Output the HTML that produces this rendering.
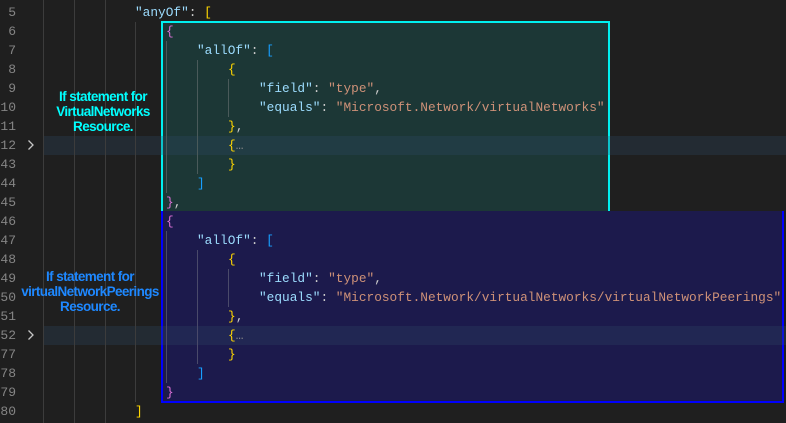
<!DOCTYPE html>
<html><head><style>
body{margin:0;width:786px;height:423px;background:#1f1f1f;overflow:hidden;position:relative;font-family:"Liberation Mono",monospace;font-size:12.8px}
.l{position:absolute;height:19px;line-height:19px;white-space:pre}
.n{position:absolute;left:0;width:16px;text-align:right;color:#858585;height:19px;line-height:19px;font-family:"Liberation Mono",monospace;font-size:13px}
.g{position:absolute;width:1px;background:#3c3c3c}
.k{color:#9cdcfe}.s{color:#ce9178}.w{color:#cccccc}.y{color:#ffd700}.p{color:#da70d6}.b{color:#179fff}.d{color:#8a8a8a}
.box{position:absolute;box-sizing:border-box;border:2px solid}
.hl{position:absolute;left:43px;right:0;height:19px;background:rgba(45,75,105,0.28)}
.ann{position:absolute;font-family:"Liberation Sans",sans-serif;font-weight:bold;font-size:13.5px;line-height:15px;text-align:center;letter-spacing:-0.6px}
.chev{position:absolute;left:27px}
</style></head><body>
<div class="box" style="left:161px;top:21px;width:449px;height:192px;border-color:#00f0f0;background:#1c3736"></div>
<div class="box" style="left:161px;top:211px;width:623px;height:192px;border-color:#0000ff;background:#1c1a4c;border-top:none"></div>
<div class="hl" style="top:136px"></div>
<div class="hl" style="top:326px"></div>
<div class="g" style="left:43px;top:0;height:423px"></div>
<div class="g" style="left:74px;top:0;height:423px"></div>
<div class="g" style="left:105px;top:0;height:423px"></div>
<div class="g" style="left:135px;top:22px;height:380px"></div>
<div class="g" style="left:166px;top:41px;height:152px;background:#4a5a5a"></div>
<div class="g" style="left:197px;top:60px;height:114px;background:#4a5a5a"></div>
<div class="g" style="left:228px;top:79px;height:38px;background:#4a5a5a"></div>
<div class="g" style="left:166px;top:231px;height:152px;background:#4a4a6a"></div>
<div class="g" style="left:197px;top:250px;height:114px;background:#4a4a6a"></div>
<div class="g" style="left:228px;top:269px;height:38px;background:#4a4a6a"></div>

<div class="n" style="top:3px">5</div><div class="n" style="top:22px">6</div><div class="n" style="top:41px">7</div><div class="n" style="top:60px">8</div><div class="n" style="top:79px">9</div><div class="n" style="top:98px">10</div><div class="n" style="top:117px">11</div><div class="n" style="top:136px">12</div><div class="n" style="top:155px">43</div><div class="n" style="top:174px">44</div><div class="n" style="top:193px">45</div><div class="n" style="top:212px">46</div><div class="n" style="top:231px">47</div><div class="n" style="top:250px">48</div><div class="n" style="top:269px">49</div><div class="n" style="top:288px">50</div><div class="n" style="top:307px">51</div><div class="n" style="top:326px">52</div><div class="n" style="top:345px">77</div><div class="n" style="top:364px">78</div><div class="n" style="top:383px">79</div><div class="n" style="top:402px">80</div>
<svg class="chev" style="top:139px" width="8" height="12"><path d="M1.5 1.5 L6 6 L1.5 10.5" stroke="#c5c5c5" stroke-width="1.3" fill="none"/></svg>
<svg class="chev" style="top:329px" width="8" height="12"><path d="M1.5 1.5 L6 6 L1.5 10.5" stroke="#c5c5c5" stroke-width="1.3" fill="none"/></svg>

<div class="l" style="left:135px;top:3px"><span class="k">"anyOf"</span><span class="w">: </span><span class="y">[</span></div>
<div class="l" style="left:166px;top:22px"><span class="p">{</span></div>
<div class="l" style="left:197px;top:41px"><span class="k">"allOf"</span><span class="w">: </span><span class="b">[</span></div>
<div class="l" style="left:228px;top:60px"><span class="y">{</span></div>
<div class="l" style="left:259px;top:79px"><span class="k">"field"</span><span class="w">: </span><span class="s">"type"</span><span class="w">,</span></div>
<div class="l" style="left:259px;top:98px"><span class="k">"equals"</span><span class="w">: </span><span class="s">"Microsoft.Network/virtualNetworks"</span></div>
<div class="l" style="left:228px;top:117px"><span class="y">}</span><span class="w">,</span></div>
<div class="l" style="left:228px;top:136px"><span class="y">{</span><span class="d">…</span></div>
<div class="l" style="left:228px;top:155px"><span class="y">}</span></div>
<div class="l" style="left:197px;top:174px"><span class="b">]</span></div>
<div class="l" style="left:166px;top:193px"><span class="p">}</span><span class="w">,</span></div>
<div class="l" style="left:166px;top:212px"><span class="p">{</span></div>
<div class="l" style="left:197px;top:231px"><span class="k">"allOf"</span><span class="w">: </span><span class="b">[</span></div>
<div class="l" style="left:228px;top:250px"><span class="y">{</span></div>
<div class="l" style="left:259px;top:269px"><span class="k">"field"</span><span class="w">: </span><span class="s">"type"</span><span class="w">,</span></div>
<div class="l" style="left:259px;top:288px"><span class="k">"equals"</span><span class="w">: </span><span class="s">"Microsoft.Network/virtualNetworks/virtualNetworkPeerings"</span></div>
<div class="l" style="left:228px;top:307px"><span class="y">}</span><span class="w">,</span></div>
<div class="l" style="left:228px;top:326px"><span class="y">{</span><span class="d">…</span></div>
<div class="l" style="left:228px;top:345px"><span class="y">}</span></div>
<div class="l" style="left:197px;top:364px"><span class="b">]</span></div>
<div class="l" style="left:166px;top:383px"><span class="p">}</span></div>
<div class="l" style="left:135px;top:402px"><span class="y">]</span></div>

<div class="ann" style="left:38px;top:89px;width:130px;color:#00ffff">If statement for<br>VirtualNetworks<br>Resource.</div>
<div class="ann" style="left:10px;top:269px;width:160px;color:#1e88ff">If statement for<br>virtualNetworkPeerings<br>Resource.</div>
</body></html>
